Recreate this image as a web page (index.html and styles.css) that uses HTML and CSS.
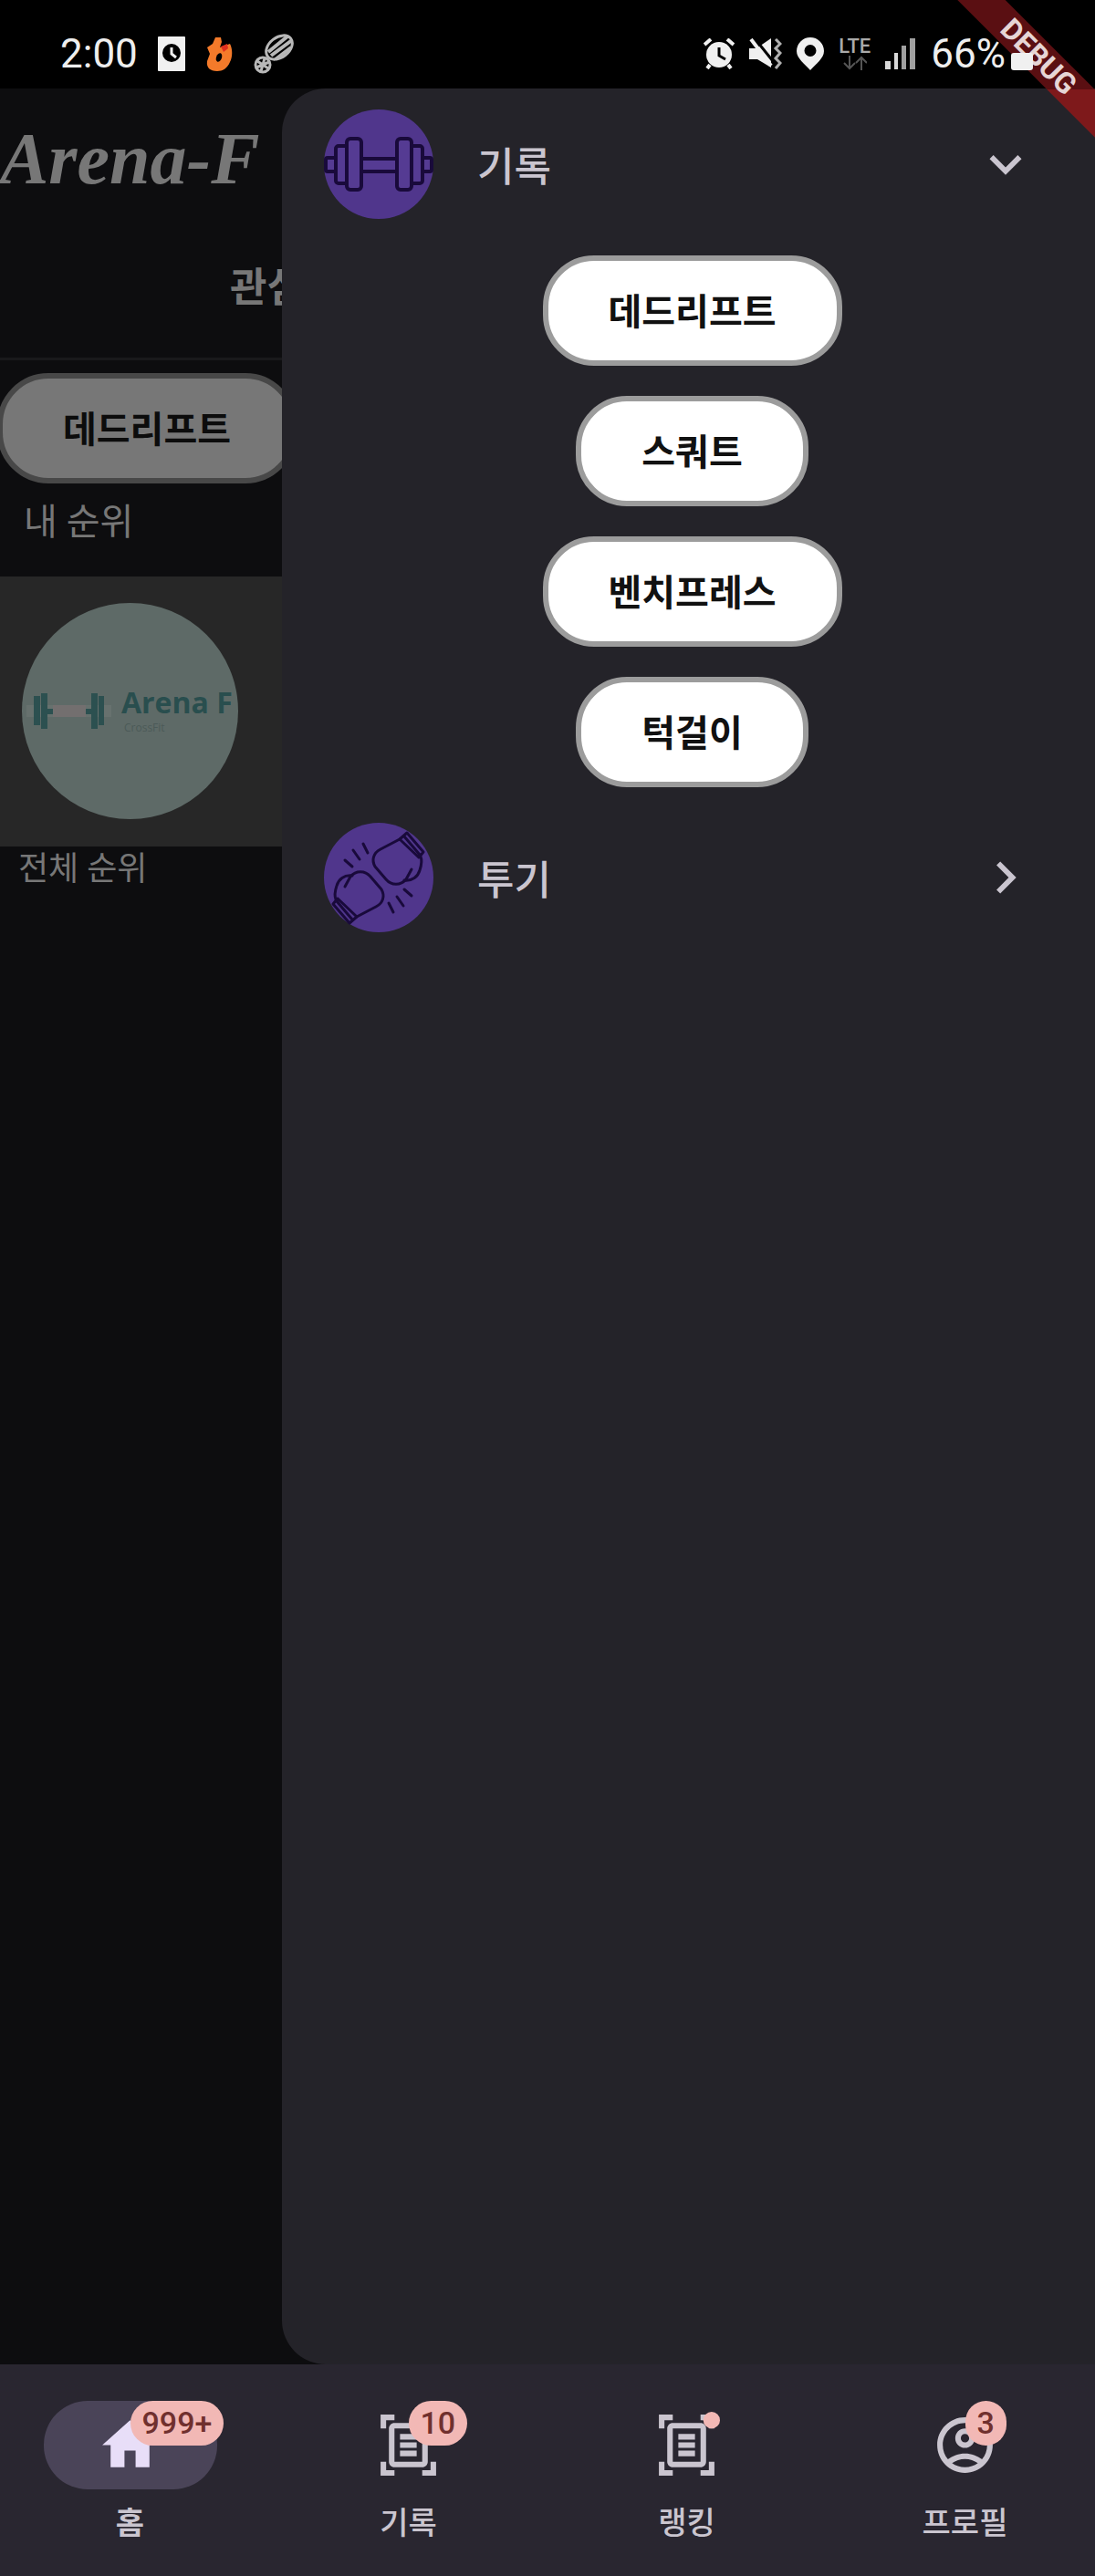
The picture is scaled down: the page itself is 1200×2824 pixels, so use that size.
FILE: index.html
```html
<!DOCTYPE html>
<html lang="ko">
<head>
  <meta charset="UTF-8"/>
  <meta name="viewport" content="width=device-width,initial-scale=1.0"/>
  <title>Arena-F</title>
  <link rel="stylesheet" href="styles.css">
</head>
<body>
<div class="status-bar">
  <div class="status-group left">
    <span class="status-text">2:00</span>
    <svg width="30" height="38" viewBox="0 0 30 38"><rect width="30" height="38" rx="1" fill="#f0f0f0"/><circle cx="15" cy="18" r="10" fill="#000"/><path d="M15 12v7l5 4" fill="none" stroke="#f0f0f0" stroke-width="3"/></svg>
    <svg width="30" height="38" viewBox="0 0 30 38"><path d="M11 1l6 0 1 5-2 6 11-4c3 6 3 14 0 20-3 7-8 10-14 10C5 38 1 34 2 27l3-8-3-7 6-4z" fill="#f47a2a"/><path d="M17 11l7-3 1 5-5 4z" fill="#e0301e"/><ellipse cx="15" cy="23" rx="3" ry="5" fill="#000" transform="rotate(20 15 23)"/></svg>
    <svg width="46" height="44" viewBox="0 0 46 44"><g fill="none" stroke="#b8b8b8"><ellipse cx="29" cy="15" rx="16" ry="11" transform="rotate(-38 29 15)" stroke-width="3"/><path d="M17 20L38 3M20 24L43 7M25 28l17-13" stroke-width="4"/><circle cx="11" cy="34" r="8" stroke-width="3"/><path d="M5 30l12 8M13 27L9 41M4 37l14-6" stroke-width="3"/></g></svg>
  </div>
  <div class="status-group right">
    <svg width="34" height="34" viewBox="0 0 34 34"><path d="M1 7l7-6M33 7l-7-6M7 29l-3 4M27 29l3 4" stroke="#f0f0f0" stroke-width="4"/><circle cx="17" cy="18" r="14" fill="#f0f0f0"/><path d="M17 10v9l7 4" fill="none" stroke="#000" stroke-width="3"/></svg>
    <svg width="36" height="34" viewBox="0 0 36 34"><path d="M0 11h8L24 0v32L9 23H0z" fill="#f0f0f0"/><path d="M6 0l24 30" stroke="#000" stroke-width="3"/><path d="M2 1l22 29" stroke="#f0f0f0" stroke-width="4"/><path d="M29 1l5 5-5 5 5 5-5 6 5 5-5 6" fill="none" stroke="#b0b0b0" stroke-width="3"/></svg>
    <svg width="30" height="36" viewBox="0 0 30 36"><path fill-rule="evenodd" d="M15 0a15 15 0 0 1 15 15c0 8-9 14-15 21C9 29 0 23 0 15A15 15 0 0 1 15 0zm0 8a6 6 0 1 0 0 13 6 6 0 0 0 0-13z" fill="#f0f0f0"/></svg>
    <span class="lte">LTE<svg width="26" height="16" viewBox="0 0 26 16"><path d="M7 0v14M1 8l6 6 6-6M20 16V2M14 8l6-6 6 6" fill="none" stroke="#555" stroke-width="2"/></svg></span>
    <svg width="34" height="34" viewBox="0 0 34 34"><path d="M0 25h6v9H0z" fill="#d8d8d8"/><path d="M10 16h4v18h-4z" fill="#d8d8d8"/><path d="M18 8h5v26h-5zM27 0h6v34h-6z" fill="#a0a0a0"/></svg>
    <span class="battery"><span class="status-text">66%</span><svg width="24" height="36" viewBox="0 0 24 36"><rect y="17" width="24" height="19" rx="3" fill="#f0f0f0"/></svg></span>
  </div>
</div>
<div class="debug"><span>DEBUG</span></div>

<main class="screen">
  <section class="home">
    <h1>Arena-F</h1>
    <div class="tabs"><span>관심</span></div>
    <div class="chips"><button class="pill">데드리프트</button></div>
    <h2>내 순위</h2>
    <div class="my-rank">
      <svg class="avatar" viewBox="0 0 237 237">
        <clipPath id="round"><circle cx="118.500" cy="118.500" r="118.500"/></clipPath>
        <g clip-path="url(#round)">
          <rect width="237" height="237" fill="#5e6a67"/>
          <path d="M5 112h93v13H5z" fill="#67716e"/>
          <path d="M34 112h36v13H34z" fill="#736f6f"/>
          <path d="M13 102h7v32h-7zM21 99h7v39h-7zM28 116h6v6h-6zM70 116h6v6h-6zM76 99h7v39h-7zM84 102h6v32h-6z" fill="#2c5050"/>
          <text class="logo-name" x="109" y="121">Arena F</text>
          <text class="logo-sub" x="112" y="141">CrossFit</text>
        </g>
      </svg>
    </div>
    <h3>전체 순위</h3>
  </section>

  <aside class="drawer">
    <button class="drawer-row">
      <svg class="category" viewBox="0 0 120 120">
        <circle cx="60" cy="60" r="60" fill="#50368c"/>
        <g fill="#553b93" stroke="#190a3b" stroke-width="4">
          <rect x="2" y="53" width="11" height="15" rx="2"/>
          <rect x="107" y="53" width="11" height="15" rx="2"/>
          <rect x="40" y="54" width="40" height="14"/>
          <rect x="13" y="40" width="13" height="41" rx="3"/>
          <rect x="95" y="40" width="13" height="41" rx="3"/>
          <rect x="25" y="32" width="16" height="56" rx="4"/>
          <rect x="80" y="32" width="16" height="56" rx="4"/>
        </g>
      </svg>
      <span>기록</span>
      <svg class="chevron" viewBox="0 0 24 24"><path d="M16.590 8.590L12 13.170 7.410 8.590 6 10l6 6 6-6z"/></svg>
    </button>
    <div class="drawer-list">
      <button class="pill">데드리프트</button>
      <button class="pill">스쿼트</button>
      <button class="pill">벤치프레스</button>
      <button class="pill">턱걸이</button>
    </div>
    <button class="drawer-row">
      <svg class="category" viewBox="0 0 120 120">
        <circle cx="60" cy="60" r="60" fill="#50368c"/>
        <g id="glove" fill="none" stroke="#190a3b" stroke-width="3" stroke-linecap="round" stroke-linejoin="round">
          <path d="M83 18L62 29C54 33 52 41 56 48l12 14c6 7 16 7 22 0l6-11"/>
          <path d="M88 63c9 1 15-4 17-11 2-6 3-10 1-15"/>
          <path d="M83 18l8-7 18 21-5 6zM88 15l17 20"/>
          <path d="M23 41l8 7M32 30l7 10M43 23l5 10"/>
        </g>
        <use href="#glove" transform="rotate(180 59.500 60.500)"/>
      </svg>
      <span>투기</span>
      <svg class="chevron closed" viewBox="0 0 24 24"><path d="M16.590 8.590L12 13.170 7.410 8.590 6 10l6 6 6-6z"/></svg>
    </button>
  </aside>
</main>

<nav class="bottom-nav">
  <a class="active" href="#home">
    <span class="indicator">
      <svg viewBox="0 0 24 24"><path d="M10 20v-6h4v6h5v-8h3L12 3 2 12h3v8z"/></svg>
      <span class="badge">999+</span>
    </span>
    홈
  </a>
  <a href="#record">
    <span class="indicator">
      <svg viewBox="0 0 24 24"><path id="scan" d="M7 3H4v3H2V1h5v2zm15 3V1h-5v2h3v3h2zM7 21H4v-3H2v5h5v-2zm13-3v3h-3v2h5v-5h-2zM17 6H7v12h10V6zm2 12c0 1.100-.9 2-2 2H7c-1.100 0-2-.9-2-2V6c0-1.100.9-2 2-2h10c1.100 0 2 .9 2 2v12zM15 8H9v2h6V8zm0 3H9v2h6v-2zm0 3H9v2h6v-2z"/></svg>
      <span class="badge">10</span>
    </span>
    기록
  </a>
  <a href="#ranking">
    <span class="indicator">
      <svg viewBox="0 0 24 24"><use href="#scan"/><circle class="dot" cx="21" cy="3" r="3"/></svg>
    </span>
    랭킹
  </a>
  <a href="#profile">
    <span class="indicator">
      <svg viewBox="0 0 24 24"><path d="M12 2C6.480 2 2 6.480 2 12s4.480 10 10 10 10-4.480 10-10S17.520 2 12 2zM7.350 18.500C8.660 17.560 10.260 17 12 17s3.340.56 4.650 1.500C15.340 19.440 13.740 20 12 20s-3.340-.56-4.650-1.500zm10.790-1.380C16.450 15.800 14.320 15 12 15s-4.450.8-6.140 2.120C4.700 15.730 4 13.950 4 12c0-4.420 3.580-8 8-8s8 3.580 8 8c0 1.950-.7 3.730-1.860 5.120z"/><path d="M12 6c-1.930 0-3.500 1.570-3.500 3.500S10.070 13 12 13s3.500-1.570 3.500-3.500S13.930 6 12 6zm0 5c-.83 0-1.500-.67-1.500-1.500S11.170 8 12 8s1.500.67 1.500 1.500S12.830 11 12 11z"/></svg>
      <span class="badge">3</span>
    </span>
    프로필
  </a>
</nav>
</body>
</html>
```
FILE: styles.css
```css
:root{--page:#0d0d0f;--drawer:#242329;--nav:#292630;--light:#cac5cf;--dim:#777;--pink:#f2b8b5}
*{box-sizing:border-box}
body{margin:0;position:relative;display:flex;flex-direction:column;min-height:100vh;overflow-x:hidden;background:#000;color:var(--light);font-family:Roboto,"Noto Sans CJK KR",sans-serif}
h1,h2,h3{margin:0;font-weight:400}
button{border:none;background:none;font-family:inherit;color:inherit;cursor:pointer}
svg{display:block;flex:none}

/* status bar */
.status-bar{display:flex;justify-content:space-between;align-items:center;height:97px;padding:20px 68px 0 66px;position:relative;z-index:3}
.status-group{display:flex;align-items:center}
.status-group.left{gap:22px}
.status-group.right{gap:16px}
.status-text{font-size:44px;line-height:48px;color:#eee}
.battery{display:flex;align-items:center;gap:6px}
.lte{display:flex;flex-direction:column;align-items:center;font-size:22px;line-height:20px;font-weight:500;color:#aaa}

/* debug ribbon */
.debug{position:absolute;top:0;right:0;width:170px;height:170px;overflow:hidden;z-index:2;pointer-events:none}
.debug span{position:absolute;top:44px;left:-22px;width:260px;transform:rotate(45deg);background:linear-gradient(135deg,#5a0f12 calc(50% + 35px),#7e191b 0);color:#e6d5d5;font-size:32px;line-height:37px;font-weight:700;text-align:center}

/* dimmed page behind the drawer */
.screen{flex:1;position:relative;background:var(--page)}
.home{color:var(--dim)}
.home h1{padding-top:27px;font:italic 700 80px/100px "Liberation Serif",serif}
.tabs{display:flex;height:171px;padding:60px 252px;border-bottom:3px solid #19191b;font-size:44px;line-height:64px;font-weight:700;white-space:nowrap}
.chips{margin-left:-3px;padding-top:14px}
.home h2{padding:12px 26px 0;font-size:40px;line-height:62px}
.home h3{padding:0 20px;font-size:36px;line-height:50px}
.my-rank{margin-top:28px;padding:29px 24px 30px;background:#272727}
.avatar{width:237px;height:237px}
.logo-name{font:700 32px "Open Sans",sans-serif;fill:#294e4e}
.logo-sub{font:12px/12px "Open Sans",sans-serif;fill:#4c5a58}

.pill{height:121px;padding:0 66px 4px;border:6px solid #9c9c9c;border-radius:56px;background:#fff;color:#111;font-size:40px;font-weight:700}
.home .pill{border-color:#484848;background:#777;color:#0c0c0c}

/* drawer */
.drawer{position:absolute;top:0;right:0;bottom:0;width:74.250%;border-radius:48px 0 0 48px;background:var(--drawer)}
.drawer-row{display:flex;align-items:center;width:100%;height:166px;padding:0 63px 0 46px;font-size:44px;font-weight:500;text-align:left}
.drawer-row span{flex:1;padding-left:48px}
.category{width:120px;height:120px}
.chevron{width:70px;height:70px;fill:var(--light)}
.chevron.closed{transform:rotate(-90deg)}
.drawer-list{display:flex;flex-direction:column;align-items:center;gap:33px;padding:17px 0 16px 8px}

/* bottom navigation */
.bottom-nav{display:flex;height:232px;margin:0 -10px;padding-top:40px;background:var(--nav)}
.bottom-nav a{flex:1;display:flex;flex-direction:column;align-items:center;gap:12px;color:var(--light);font-size:34px;line-height:50px;font-weight:500;text-decoration:none}
.bottom-nav .active{font-weight:700}
.indicator{position:relative;display:flex;align-items:center;justify-content:center;width:190px;height:97px;border-radius:48px;font-weight:500}
.indicator svg{width:73px;height:73px;fill:currentColor}
.active .indicator{background:#4a4458;color:#e8def8}
.badge{position:absolute;left:50%;bottom:50%;height:49px;padding:0 13px;border-radius:25px;background:var(--pink);color:#70302e;line-height:49px}
.dot{fill:var(--pink)}
```
